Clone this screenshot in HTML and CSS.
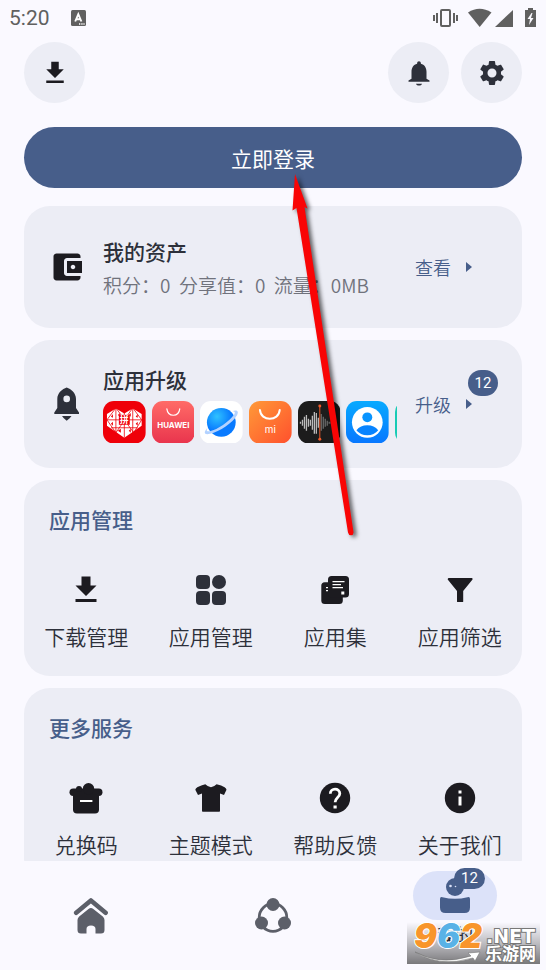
FILE: index.html
```html
<!DOCTYPE html>
<html lang="zh-CN">
<head>
<meta charset="utf-8">
<meta name="viewport" content="width=device-width, initial-scale=1">
<title>我的</title>
<link rel="stylesheet" href="styles.css">
</head>
<body>
<div class="screen">
  <header class="status">
    <span class="status-time">5:20</span>
    <svg class="status-input" width="15" height="16" viewBox="0 0 15 16"><rect width="15" height="16" rx="1.5" fill="#606060"/><path d="M4.2 11.5 7.3 4.2 10.4 11.5M5.4 9.2h3.8" fill="none" stroke="#fff" stroke-width="1.9"/><path d="M8 14h1.3M10.3 14h1.3M12.4 14h1.2" stroke="#fff" stroke-width="1.4"/></svg>
    <svg class="status-icons" width="104" height="20" viewBox="0 0 104 20" fill="#606060"><rect x="8" y="2" width="9" height="16" rx="1" fill="none" stroke="#606060" stroke-width="2"/><path d="M0 7h2v6H0zM3 5h2v10H3zM20 5h2v10h-2zM23 7h2v6h-2z"/><path d="M35 4.500Q46.500-3 58.500 4.500L46.700 19Z"/><path d="M80 2v17H62z"/><path d="M95 0h5v2h3v17H92V2h3z"/><path d="M98.500 5 94.500 11H97l-1 6 4.500-7H98l1.500-5z" fill="#faf9ff"/></svg>
  </header>

  <main class="content">
    <div class="toolbar">
      <button class="round" aria-label="下载"><svg width="30" height="30" viewBox="0 0 24 24" fill="#1c1b20"><path d="M5 20h14v-2H5zM19 9h-4V3H9v6H5l7 7z"/></svg></button>
      <span class="spacer"></span>
      <button class="round" aria-label="通知"><svg width="30" height="30" viewBox="0 0 24 24" fill="#2d303a"><path d="M12 22c1.400 0 2.200-.6 2.400-1.500H9.600C9.800 21.400 10.600 22 12 22zM18 16.500V11c0-3.070-1.640-5.640-4.500-6.320V4c0-.83-.67-1.500-1.500-1.500s-1.500.67-1.500 1.500v.68C7.630 5.360 6 7.920 6 11v5.500l-2.400 1.400v1.100h16.800v-1.100z"/></svg></button>
      <button class="round" aria-label="设置"><svg width="30" height="30" viewBox="0 0 24 24" fill="#2d303a"><path d="M19.140 12.940c.04-.3.06-.61.06-.94 0-.32-.02-.64-.07-.94l2.030-1.580c.18-.14.23-.41.12-.61l-1.920-3.320c-.12-.22-.37-.29-.59-.22l-2.390.96c-.5-.38-1.030-.7-1.620-.94l-.36-2.540c-.04-.24-.24-.41-.48-.41h-3.840c-.24 0-.43.17-.47.41l-.36 2.540c-.59.24-1.130.57-1.620.94l-2.390-.96c-.22-.08-.47 0-.59.22L2.740 8.870c-.12.21-.08.47.12.61l2.030 1.580c-.05.3-.09.63-.09.94s.02.64.07.94l-2.030 1.580c-.18.14-.23.41-.12.61l1.920 3.320c.12.22.37.29.59.22l2.390-.96c.5.38 1.030.7 1.620.94l.36 2.540c.05.24.24.41.48.41h3.840c.24 0 .44-.17.47-.41l.36-2.540c.59-.24 1.130-.56 1.620-.94l2.390.96c.22.08.47 0 .59-.22l1.920-3.320c.12-.22.07-.47-.12-.61zM12 15.600a3.600 3.600 0 1 1 0-7.200 3.600 3.600 0 0 1 0 7.200z"/></svg></button>
    </div>

    <button class="login">立即登录</button>

    <section class="card row assets">
      <svg class="row-icon" width="36" height="36" viewBox="0 0 24 24" fill="#1c1b20"><path d="M21 18v1c0 1.100-.9 2-2 2H5c-1.110 0-2-.9-2-2V5c0-1.100.89-2 2-2h14c1.100 0 2 .9 2 2v1h-9c-1.110 0-2 .9-2 2v8c0 1.100.89 2 2 2h9zm-9-2h10V8H12v8zm4-2.500c-.83 0-1.500-.67-1.500-1.500s.67-1.500 1.500-1.500 1.500.67 1.500 1.500-.67 1.500-1.500 1.500z"/></svg>
      <div class="row-body">
        <h2 class="title">我的资产</h2>
        <p class="points">积分：0&nbsp; 分享值：0&nbsp; 流量：0MB</p>
      </div>
      <a class="action" href="#assets">查看<svg width="8" height="12" viewBox="0 0 8 12"><path d="M1 1v10l6-5z" fill="currentColor"/></svg></a>
    </section>

    <section class="card row upgrades">
      <svg class="row-icon" width="36" height="36" viewBox="0 0 36 36" fill="#2d303a"><path fill-rule="evenodd" d="M17.700 1.500C22 3 27 7 27 13v9l3 4.500V28H5.300v-1.500l3-4.500v-9c0-6 5-10 9.400-11.500zM17.700 9.600a3.300 3.300 0 1 0 0 6.600 3.300 3.300 0 0 0 0-6.600z"/><path d="M13 30h9.500q-1.500 2.500-4.800 4.800Q14.500 32.500 13 30z"/></svg>
      <div class="row-body">
        <h2 class="title">应用升级</h2>
        <div class="apps">
          <svg class="app" viewBox="0 0 43 43"><rect width="43" height="43" rx="11" fill="#ef0009"/><path d="M4 13 13 7.500l8.500 5L30 7.500l9 5.500v12L21.500 37 4 25z" fill="#fff"/><path d="M4 19h35M8 27h27M21.500 12v25M13 7l-9 12 9 13 9-13zM30 7l-8.500 12L31 32l8-13zM13 7v25M30 7v25" fill="none" stroke="#ef0009" stroke-width=".8"/><path d="m8 16 2-3v4zM15 14l2-2v4zM26 14l2-2v4zM33 16l2-3v4zM8 23l2-2v4zM33 23l2-2v4zM15 30l3-2v4zM26 30l2-2v4z" fill="#ef0009"/><rect x="16" y="14" width="11" height="10" fill="#ef0009"/><text x="21.500" y="22" class="mark mark-pin">拼</text></svg>
          <svg class="app" viewBox="0 0 43 43"><defs><linearGradient id="hw" x2="0" y2="1"><stop stop-color="#ff6b67"/><stop offset="1" stop-color="#e9344d"/></linearGradient></defs><rect width="43" height="43" rx="11" fill="url(#hw)"/><path d="M15 8c1 8.500 12 8.500 13 0" fill="none" stroke="#fff" stroke-width="1.200" stroke-linecap="round"/><text x="21.500" y="27.500" class="mark mark-huawei">HUAWEI</text></svg>
          <svg class="app" viewBox="0 0 43 43"><defs><radialGradient id="pl" cx=".35" cy=".3"><stop stop-color="#2fc2ff"/><stop offset="1" stop-color="#087aff"/></radialGradient></defs><rect width="43" height="43" rx="11" fill="#fff"/><circle cx="21.500" cy="21.500" r="14.500" fill="url(#pl)"/><path d="M7.500 27C3 32 4.500 34.500 10 33c10-2.500 23-11 27.500-19 2-4-.5-5.500-5.500-3.500 3-.5 4 1 2.500 3C29 21 18 28.500 10 30.500c-3 .5-4-.5-2.500-3.500z" fill="#b3d2ff"/></svg>
          <svg class="app" viewBox="0 0 43 43"><defs><linearGradient id="mi" x2="1" y2="1"><stop stop-color="#ff9a38"/><stop offset="1" stop-color="#ff502d"/></linearGradient></defs><rect width="43" height="43" rx="11" fill="url(#mi)"/><path d="M11 9c1 12 19 12 20 0" fill="none" stroke="#fff" stroke-width="2" stroke-linecap="round"/><text x="21.500" y="32" class="mark mark-mi">mi</text></svg>
          <svg class="app" viewBox="0 0 43 43"><rect width="43" height="43" rx="11" fill="#1c1c1c"/><path d="M2.500 21v2M4.500 19v6M6.500 16v12M8.500 14v16M10.500 18v8M12.500 19v6M14.500 15v14M16.500 11v22M18.500 12v21M20.500 17v10" stroke="#bcbcbc" stroke-width="1.300"/><path d="M23.500 13v17M25.500 16v12M27.500 18v8M29.500 20v5M31.500 21v2M33.500 21v2" stroke="#696969" stroke-width="1.300"/><path d="M22 5v33" stroke="#f05a2a" stroke-width="1"/><circle cx="22" cy="5" r="1.500" fill="#f05a2a"/><circle cx="22" cy="38.500" r="1.500" fill="#f05a2a"/></svg>
          <svg class="app" viewBox="0 0 43 43"><defs><linearGradient id="ct" x2="0" y2="1"><stop stop-color="#08aaff"/><stop offset="1" stop-color="#0877ff"/></linearGradient></defs><rect width="43" height="43" rx="11" fill="url(#ct)"/><circle cx="21.500" cy="21.500" r="15.500" fill="#fff"/><circle cx="21.500" cy="16.500" r="5" fill="#0894ff"/><path d="M10.500 29.500q4-5 11-5t11 5q-4 5-11 5t-11-5z" fill="#0884ff"/></svg>
          <svg class="app" viewBox="0 0 43 43"><rect width="43" height="43" rx="11" fill="#18cbb5"/></svg>
        </div>
      </div>
      <a class="action" href="#upgrades">升级<svg width="8" height="12" viewBox="0 0 8 12"><path d="M1 1v10l6-5z" fill="currentColor"/></svg></a>
      <span class="badge badge-card">12</span>
    </section>

    <section class="card group">
      <h2 class="group-title">应用管理</h2>
      <div class="grid">
        <a class="tile" href="#downloads"><svg width="36" height="36" viewBox="0 0 24 24" fill="#1c1b20"><path d="M5 20h14v-2H5zM19 9h-4V3H9v6H5l7 7z"/></svg>下载管理</a>
        <a class="tile" href="#manage"><svg width="36" height="36" viewBox="0 0 36 36" fill="#2d303a"><rect x="3" y="3" width="14" height="14" rx="4"/><circle cx="26" cy="10" r="7"/><rect x="3" y="19" width="14" height="14" rx="4"/><rect x="19" y="19" width="14" height="14" rx="4"/></svg>应用管理</a>
        <a class="tile" href="#sets"><svg width="36" height="36" viewBox="0 0 36 36" fill="#1c1b20"><rect x="4.300" y="10.300" width="21.500" height="21.700" rx="3.500"/><rect x="11" y="4" width="21" height="21.500" rx="3.500"/><path d="M15.500 9.700h12M15.500 12.700h8.500M15.500 15.700h10.500M9 15.700h2M9 18.700h2" stroke="#fff" stroke-width="1.200"/><path d="M24.300 19.500h3v3h-3z" fill="#fff"/></svg>应用集</a>
        <a class="tile" href="#filter"><svg width="36" height="36" viewBox="0 0 36 36" fill="#1c1b20"><path d="M6.500 6H30q1 .5.500 1.500L21.200 19v10.500q0 .5-.5.500h-5q-.7 0-.7-.5V19L5.700 7.500Q5.500 6.500 6.500 6z"/></svg>应用筛选</a>
      </div>
    </section>

    <section class="card group">
      <h2 class="group-title">更多服务</h2>
      <div class="grid">
        <a class="tile" href="#redeem"><svg width="36" height="36" viewBox="0 0 36 36" fill="#1c1b20"><rect x="1.500" y="8.500" width="33" height="7.500" rx="3.700"/><path d="M5 13h26v16.500q0 4-4 4H9q-4 0-4-4z"/><circle cx="20.500" cy="8.800" r="5.700"/><circle cx="11" cy="9" r="3"/><path d="M12 21h12.400" stroke="#fff" stroke-width="2"/></svg>兑换码</a>
        <a class="tile" href="#theme"><svg width="36" height="36" viewBox="0 0 36 36" fill="#1c1b20"><path d="M12.300 4.300Q18 10 23.600 4.300q5 1 8 3 1.800 1.200 1.900 2.500L31 15l-4-1.500V31q0 .8-.8.8H9.800Q9 31.800 9 31V13.500L5 15 2.300 9.800Q2.500 8.300 4.300 7.300q4-2 8-3z"/></svg>主题模式</a>
        <a class="tile" href="#help"><svg width="36" height="36" viewBox="0 0 36 36"><circle cx="18" cy="18" r="15.200" fill="#1c1b20"/><path d="M13.300 13.800c0-6.200 9.500-6 9.500-.3 0 4-4.700 4-4.700 8.800" fill="none" stroke="#fff" stroke-width="2.800"/><path d="M16.500 25.500h3.200v3h-3.200z" fill="#fff"/></svg>帮助反馈</a>
        <a class="tile" href="#about"><svg width="36" height="36" viewBox="0 0 36 36"><circle cx="18" cy="18" r="15.200" fill="#1c1b20"/><path d="M16.500 10.500h3v3h-3zM16.500 16.500h3v9h-3z" fill="#fff"/></svg>关于我们</a>
      </div>
    </section>
  </main>

  <nav class="tabs">
    <a class="tab" href="#home" aria-label="首页"><svg width="36" height="37" viewBox="0 0 36 37" fill="#5c5f69"><path d="M3.200 15.700 17.900 3.500 32.600 15.700" fill="none" stroke="#5c5f69" stroke-width="4.600" stroke-linecap="round" stroke-linejoin="round"/><path d="M15.500 12q2.400-2 4.800 0l9.500 7.500q1.700 1.500 1.700 3.500v10q0 3.500-3.500 3.500h-5.500V32q0-3.500-4.500-3.500t-4.500 3.500v4.500H8q-3.500 0-3.500-3.500V23q0-2 1.700-3.500z"/></svg></a>
    <a class="tab" href="#share" aria-label="分享"><svg width="36" height="37" viewBox="0 0 36 37" fill="#5c5f69"><circle cx="18" cy="20.500" r="13.800" fill="none" stroke="#5c5f69" stroke-width="2.800"/><circle cx="18" cy="7.500" r="6.500"/><circle cx="6.500" cy="26" r="6.500"/><circle cx="29.500" cy="26" r="6.500"/></svg></a>
    <a class="tab tab-current" href="#me"><span class="pill"><svg width="36" height="36" viewBox="0 0 36 36" fill="#475e8a"><circle cx="18" cy="9" r="9"/><path d="M3 21q0-2.500 2.500-1.700 12.500 3 25 0Q33 18.500 33 21v8.500q0 5.500-5.500 5.500h-19Q3 35 3 29.500z"/><circle cx="13.500" cy="8" r="1.300" fill="#dce2f9"/><circle cx="18.500" cy="8.500" r=".8" fill="#dce2f9"/></svg><span class="badge badge-tab">12</span></span><span class="tab-label">我的</span></a>
  </nav>

  <svg class="pointer" width="80" height="380" viewBox="0 0 80 380"><path d="M16 3 28.500 37.500 25.500 36 74.500 361q.2 3-2.500 3.200-2.500 0-3-2.700L17.500 37 13.500 39.500z" fill="#f90505"/></svg>

  <svg class="watermark" width="133" height="42" viewBox="0 0 133 42"><defs><linearGradient id="wm" x2="0" y2="1"><stop stop-opacity="0"/><stop offset=".5" stop-opacity=".24"/><stop offset="1" stop-opacity=".52"/></linearGradient></defs><rect width="133" height="42" fill="url(#wm)"/><path d="M8 30q25 14 56 4l-3-3 12-1-5 9-2-3Q32 46 8 30z" fill="#fff" stroke="#777" stroke-width=".6"/><text x="7" y="26" class="wm-num"><tspan fill="#f8952b">9</tspan><tspan fill="#59b2e6">6</tspan><tspan fill="#f8952b">2</tspan></text><text x="79" y="21" class="wm-net">.NET</text><text x="78" y="38" class="wm-cn">乐游网</text></svg>
</div>
</body>
</html>
```
FILE: styles.css
```css
* {
  box-sizing: border-box;
}

body {
  margin: 0;
  background: #faf9ff;
  color: #2d303a;
  font-family: Roboto, "Noto Sans CJK SC", sans-serif;
}

h2,
p {
  margin: 0;
}

a {
  color: inherit;
  text-decoration: none;
}

button {
  border: 0;
  padding: 0;
  font: inherit;
}

svg {
  display: block;
  flex: none;
}

.screen {
  position: relative;
  display: flex;
  flex-direction: column;
  height: 100vh;
  overflow: hidden;
}

.status {
  display: flex;
  align-items: center;
  height: 36px;
  padding: 0 9px;
  flex: none;
  color: #606060;
}

.status-time {
  font-size: 21px;
  line-height: 36px;
}

.status-input {
  margin-left: 21px;
}

.status-icons {
  margin-left: auto;
}

.content {
  display: flex;
  flex-direction: column;
  gap: 12px;
  flex: 1;
  min-height: 0;
  padding: 6px 24px 0;
  overflow: hidden;
}

.content > * {
  flex: none;
}

.toolbar {
  display: flex;
  gap: 12px;
  margin-bottom: 12px;
}

.spacer {
  flex: 1;
}

.round {
  display: flex;
  align-items: center;
  justify-content: center;
  width: 61px;
  height: 61px;
  border-radius: 50%;
  background: #ecedf5;
}

.login {
  height: 61px;
  margin-bottom: 6px;
  border-radius: 31px;
  background: #475e8a;
  color: #fff;
  font-size: 21px;
}

.card {
  position: relative;
  border-radius: 26px;
  background: #ecedf5;
}

.row {
  display: flex;
  align-items: center;
  gap: 18px;
  padding: 0 25px;
}

.assets {
  min-height: 122px;
}

.upgrades {
  min-height: 128px;
}

.row-body {
  flex: 1;
  min-width: 0;
}

.assets .row-body {
  padding-top: 4px;
}

.title,
.group-title {
  font-size: 21px;
  font-weight: 500;
  line-height: 32px;
}

.points {
  color: #70727c;
  font-family: "Noto Sans CJK SC", sans-serif;
  font-size: 19px;
  font-weight: 350;
  line-height: 32px;
  white-space: nowrap;
}

.apps {
  display: flex;
  gap: 6px;
  margin-top: 4px;
  overflow: hidden;
}

.app {
  flex: 0 0 14.5%;
  width: 14.5%;
}

.action {
  display: flex;
  align-items: center;
  gap: 14px;
  width: 82px;
  color: #475e8a;
  font-size: 18px;
  font-weight: 350;
}

.badge {
  position: absolute;
  border-radius: 13px;
  background: #475e8a;
  color: #fff;
  font-size: 15px;
  text-align: center;
}

.badge-card {
  top: 30px;
  right: 24px;
  width: 30px;
  line-height: 26px;
}

.badge-tab {
  top: -3px;
  right: 12px;
  width: 31px;
  line-height: 21px;
}

.group {
  padding: 25px 0 22px;
}

.group-title {
  padding: 0 25px;
  color: #475e8a;
}

.grid {
  display: grid;
  grid-template-columns: repeat(4, 1fr);
  padding-top: 35px;
}

.tile {
  display: flex;
  flex-direction: column;
  align-items: center;
  gap: 14px;
  font-size: 21px;
  font-weight: 350;
  line-height: 32px;
}

.tabs {
  display: grid;
  grid-template-columns: repeat(3, 1fr);
  flex: none;
  height: 109px;
}

.tab {
  display: flex;
  flex-direction: column;
  align-items: center;
  justify-content: center;
  color: #2d303a;
}

.tab-current {
  justify-content: flex-start;
  padding-top: 10px;
}

.pill {
  position: relative;
  display: flex;
  align-items: center;
  justify-content: center;
  width: 84px;
  height: 49px;
  border-radius: 25px;
  background: #dce2f9;
}

.tab-label {
  font-size: 18px;
  line-height: 32px;
}

.pointer {
  position: absolute;
  top: 171px;
  left: 279px;
  filter: drop-shadow(3px 2px 2px rgba(0, 0, 0, 0.6));
  pointer-events: none;
}

.watermark {
  position: absolute;
  right: 6px;
  bottom: 6px;
}

.mark {
  fill: #fff;
  text-anchor: middle;
}

.mark-pin {
  font: bold 9px "Noto Sans CJK SC", sans-serif;
}

.mark-huawei {
  font: bold 8px Inter, sans-serif;
}

.mark-mi {
  font: 10px Inter, sans-serif;
}

.wm-num {
  font: italic 900 34px Inter, sans-serif;
  stroke: #fff;
  stroke-width: 2px;
  paint-order: stroke;
}

.wm-net,
.wm-cn {
  fill: #fff;
  stroke: #777;
  stroke-width: 2px;
  paint-order: stroke;
}

.wm-net {
  font: bold 19px "DejaVu Sans", sans-serif;
}

.wm-cn {
  font: bold 17px "Noto Sans CJK SC", sans-serif;
}
```
